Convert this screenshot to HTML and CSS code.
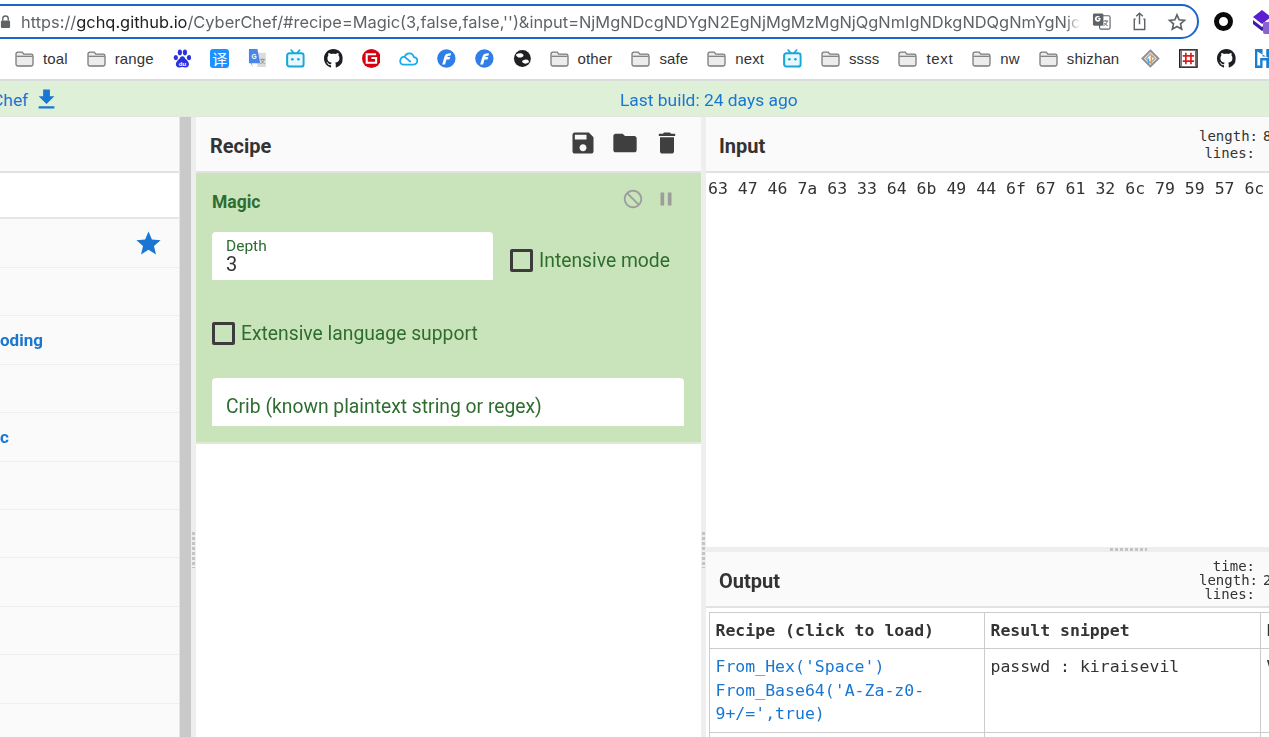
FILE: index.html
```html
<!DOCTYPE html>
<html lang="en">
<head>
<meta charset="utf-8">
<title>CyberChef</title>
<link rel="stylesheet" href="styles.css">
</head>
<body>
<svg class="defs" aria-hidden="true">
  <symbol id="folder" viewBox="0 0 19 16"><path d="M1 3.200C1 2 1.700 1.200 2.800 1.200h4.400l1.600 1.900h7.400c1.200 0 1.800.7 1.800 1.800v8.300c0 1.100-.7 1.800-1.800 1.800H2.800C1.700 15 1 14.300 1 13.200z" fill="#ececec" stroke="#7a7a7a" stroke-width="1.300"/><path d="M1.500 5.300h16" stroke="#7a7a7a" stroke-width="1.200"/></symbol>
  <symbol id="github" viewBox="0 0 16 16"><path fill="#1b1f23" d="M8 0C3.58 0 0 3.58 0 8c0 3.54 2.29 6.53 5.47 7.59.4.07.55-.17.55-.38 0-.19-.01-.82-.01-1.49-2.01.37-2.53-.49-2.69-.94-.09-.23-.48-.94-.82-1.13-.28-.15-.68-.52-.01-.53.63-.01 1.08.58 1.23.82.72 1.21 1.87.87 2.33.66.07-.52.28-.87.51-1.07-1.78-.2-3.64-.89-3.64-3.95 0-.87.31-1.59.82-2.15-.08-.2-.36-1.02.08-2.12 0 0 .67-.21 2.2.82.64-.18 1.32-.27 2-.27.68 0 1.36.09 2 .27 1.53-1.04 2.2-.82 2.2-.82.44 1.1.16 1.92.08 2.12.51.56.82 1.27.82 2.15 0 3.07-1.87 3.75-3.65 3.95.29.25.54.73.54 1.48 0 1.07-.01 1.93-.01 2.2 0 .21.15.46.55.38A8.013 8.013 0 0016 8c0-4.42-3.58-8-8-8z"/></symbol>
  <symbol id="bili" viewBox="0 0 20 20"><path d="M5.500 1l2.500 3M14.500 1L12 4" stroke="#18a8d8" stroke-width="1.800" stroke-linecap="round"/><rect x="1.200" y="4.500" width="17.600" height="14" rx="2.500" fill="#e8f7fc" stroke="#18a8d8" stroke-width="2.200"/><circle cx="6.800" cy="10.800" r="1.400" fill="#18a8d8"/><circle cx="13.200" cy="10.800" r="1.400" fill="#18a8d8"/></symbol>
  <symbol id="flogo" viewBox="0 0 20 20"><circle cx="10" cy="10" r="9.800" fill="#2f7ee8"/><path d="M5.500 16.500L8 8c.7-2.600 2.300-3.700 7-3.700l-.8 2.800c-2.600 0-3 .3-3.300 1.300h3.200l-.8 2.700h-3.200l-1.500 5.400z" fill="#fff"/></symbol>
</svg>

<header class="chrome">
  <div class="urlrow">
    <div class="omnibox">
      <svg class="lock" viewBox="0 0 12 14"><path d="M3 6V4a3 3 0 016 0v2" fill="none" stroke="#5f6368" stroke-width="1.500"/><rect x="1" y="6" width="10" height="8" rx="1.300" fill="#5f6368"/></svg>
      <div class="url"><span class="muted">https://</span>gchq.github.io<span class="muted">/CyberChef/#recipe=Magic(3,false,false,'')&amp;input=NjMgNDcgNDYgN2EgNjMgMzMgNjQgNmIgNDkgNDQgNmYgNjcgNjEgMzIgNmMgNzk</span></div>
      <svg class="omni-icon tr" viewBox="0 0 20 20"><rect x="8" y="4" width="11" height="14" rx="1.500" fill="#fff" stroke="#5f6368" stroke-width="1.200"/><rect x="1" y="1.500" width="11" height="13" rx="1.500" fill="#5f6368"/><path d="M9 6.200H6.500v1.400h1.300c-.3 1-1.900 1.300-2.600.4-.7-.9 0-2.500 1.300-2.500.5 0 .9.200 1.100.4l1-.9C7.400 4.300 6.700 4.100 6 4.100 4.200 4.100 3 5.500 3 7.200c0 1.800 1.400 3.100 3.100 3.100 2 0 3.100-1.600 2.900-4.100z" fill="#fff"/><path d="M12 9.500h5M14.500 8.500v1M16 9.500c-.5 2.500-2 4-4 5M13 11.500c.8 1.300 2 2.300 3.500 3" stroke="#5f6368" fill="none"/></svg>
      <svg class="omni-icon sh" viewBox="0 0 20 20"><path d="M6 7.500H4.500v11h11v-11H14M10 13V1.500M6.500 4.500L10 1.200l3.500 3.300" fill="none" stroke="#5f6368" stroke-width="1.500"/></svg>
      <svg class="omni-icon st" viewBox="0 0 24 24"><path d="M12 3.500l2.600 5.900 6.400.6-4.800 4.300 1.400 6.300L12 17.300l-5.600 3.300 1.400-6.300L3 10l6.400-.6z" fill="none" stroke="#5f6368" stroke-width="2"/></svg>
    </div>
    <div class="ext-ring"></div>
    <svg class="ext-purple" viewBox="0 0 20 24"><path d="M9 0l9 7-9 7-9-7z" fill="#5a1fd1"/><path d="M0 10l9 7 9-7v4l-9 7-9-7z" fill="#3d1aa8"/><rect x="10" y="12" width="12" height="12" rx="2" fill="#8a63d2"/></svg>
  </div>
  <nav class="bookmarks">
    <a class="bm"><svg class="fold"><use href="#folder"/></svg>toal</a>
    <a class="bm"><svg class="fold"><use href="#folder"/></svg>range</a>
    <svg class="ico" viewBox="0 0 20 20"><g fill="#2932e1"><ellipse cx="3" cy="9" rx="2.300" ry="2.800"/><ellipse cx="7.300" cy="3.500" rx="2.200" ry="3"/><ellipse cx="12.700" cy="3.500" rx="2.200" ry="3"/><ellipse cx="17" cy="9" rx="2.300" ry="2.800"/><path d="M10 7.500c-2 0-2.500 2-4 3.500C4.500 12.500 3 14 3 16.200c0 2.300 1.800 3.500 3.800 3.300 1-.1 2.200-.4 3.200-.4s2.200.3 3.200.4c2 .2 3.800-1 3.800-3.300 0-2.200-1.500-3.700-3-5.200C12.500 9.500 12 7.500 10 7.500z"/></g><text x="10" y="17.500" class="du">du</text></svg>
    <span class="ico yi">译</span>
    <svg class="ico" viewBox="0 0 20 20"><path d="M8 4h11v15H10z" fill="#dcdcdc"/><path d="M1 0h9l3 15H4l1 4-2-4H1z" fill="#4a86e8"/><text x="6.500" y="10.500" class="gt">G</text><text x="12.500" y="15" class="gt2">文</text></svg>
    <svg class="ico"><use href="#bili"/></svg>
    <svg class="ico"><use href="#github"/></svg>
    <svg class="ico" viewBox="0 0 20 20"><circle cx="10" cy="10" r="10" fill="#d7000f"/><path d="M15 5.500H5v9h10V9.500H10" fill="none" stroke="#fff" stroke-width="2.200"/></svg>
    <svg class="ico" viewBox="0 0 20 20"><path d="M4.500 16.500h10.500c5.500 0 6-7.500.8-8C14.500 3.500 8 3 6 8 .5 8-.5 16.500 4.500 16.500zM6 8.200l6.500 5.500" fill="none" stroke="#12b0f0" stroke-width="1.900"/></svg>
    <svg class="ico"><use href="#flogo"/></svg>
    <svg class="ico"><use href="#flogo"/></svg>
    <svg class="ico" viewBox="0 0 20 20"><circle cx="10" cy="10" r="9" fill="#202124"/><path d="M3 6c3-2 6-2 8 0 1 2-2 3-4 3S4 8 3 6zM17 14c-3 2-5 2-7 0-1-2 2-3 4-3s3 1 3 3z" fill="#fff"/></svg>
    <a class="bm bm-other"><svg class="fold"><use href="#folder"/></svg>other</a>
    <a class="bm"><svg class="fold"><use href="#folder"/></svg>safe</a>
    <a class="bm"><svg class="fold"><use href="#folder"/></svg>next</a>
    <svg class="ico"><use href="#bili"/></svg>
    <a class="bm"><svg class="fold"><use href="#folder"/></svg>ssss</a>
    <a class="bm bm-wide"><svg class="fold"><use href="#folder"/></svg>text</a>
    <a class="bm"><svg class="fold"><use href="#folder"/></svg>nw</a>
    <a class="bm"><svg class="fold"><use href="#folder"/></svg>shizhan</a>
    <svg class="ico after-last" viewBox="0 0 20 20"><path d="M10 1.500l8.500 8.500-8.500 8.500L1.500 10z" fill="#e4e4e4" stroke="#8f8f8f" stroke-width="2"/><path d="M10 5.500l4.500 4.500-4.500 4.500L5.500 10z" fill="#fff" stroke="#a8a8a8" stroke-width="1.500"/><path d="M10.500 8h3M11 8v7.500" stroke="#e8963a" stroke-width="1.600"/><path d="M8 10v6" stroke="#5aa0d8" stroke-width="1.500"/></svg>
    <svg class="ico" viewBox="0 0 20 20"><rect x=".800" y=".800" width="18.400" height="18.400" fill="#fff" stroke="#222" stroke-width="1.600"/><path d="M7.300 4v12M12.700 4v12M4 7.300h12M4 12.700h12" stroke="#d81e1e" stroke-width="1.800"/><path d="M2.500 2v16M17.500 2v16" stroke="#555"/></svg>
    <svg class="ico"><use href="#github"/></svg>
    <svg class="ico" viewBox="0 0 20 20"><path d="M0 0h8v8h4V0h8v20h-8v-8H8v8H0zM2.500 2.500v15h3v-8h9" fill="#1a7ed0" fill-rule="evenodd"/></svg>
  </nav>
</header>

<div class="banner">
  <div class="dl">
    <a class="dl-link">Chef</a>
    <svg class="dl-icon" viewBox="0 0 24 24"><path d="M19 9h-4V3H9v6H5l7 7 7-7zM5 18v2h14v-2H5z"/></svg>
  </div>
  <a class="build">Last build: 24 days ago</a>
</div>

<main class="app">
  <aside class="ops">
    <div class="pane-head"></div>
    <div class="search"></div>
    <ul class="cats">
      <li class="cat first"><svg class="star" viewBox="0 0 24 24"><path d="M12 17.270L18.180 21l-1.640-7.030L22 9.240l-7.190-.61L12 2 9.190 8.630 2 9.240l5.460 4.730L5.820 21z"/></svg></li>
      <li class="cat"></li>
      <li class="cat">oding</li>
      <li class="cat"></li>
      <li class="cat">c</li>
      <li class="cat"></li>
      <li class="cat"></li>
      <li class="cat"></li>
      <li class="cat"></li>
      <li class="cat"></li>
      <li class="cat"></li>
    </ul>
  </aside>
  <div class="scrollbar"></div>
  <div class="gutter-v"><span class="grip"></span></div>

  <section class="recipe">
    <div class="pane-head recipe-head">
      <h2 class="title">Recipe</h2>
      <div class="tools">
        <svg class="tool" viewBox="0 0 24 24"><path d="M17 3H5c-1.110 0-2 .9-2 2v14c0 1.100.89 2 2 2h14c1.100 0 2-.9 2-2V7l-4-4zm-5 16c-1.660 0-3-1.340-3-3s1.340-3 3-3 3 1.340 3 3-1.340 3-3 3zm3-10H5V5h10v4z"/></svg>
        <svg class="tool" viewBox="0 0 24 24"><path d="M10 4H4c-1.100 0-1.990.9-1.990 2L2 18c0 1.100.9 2 2 2h16c1.100 0 2-.9 2-2V8c0-1.100-.9-2-2-2h-8l-2-2z"/></svg>
        <svg class="tool" viewBox="0 0 24 24"><path d="M6 19c0 1.100.9 2 2 2h8c1.100 0 2-.9 2-2V7H6v12zM19 4h-3.500l-1-1h-5l-1 1H5v2h14V4z"/></svg>
      </div>
    </div>
    <div class="op">
      <div class="op-head">
        <span class="op-name">Magic</span>
        <span class="op-ctl">
          <svg class="ctl" viewBox="0 0 24 24"><path d="M12 2C6.480 2 2 6.480 2 12s4.480 10 10 10 10-4.480 10-10S17.520 2 12 2zm0 18c-4.420 0-8-3.580-8-8 0-1.850.63-3.550 1.690-4.900L16.900 18.310C15.550 19.370 13.850 20 12 20zm6.310-3.100L7.100 5.690C8.450 4.630 10.150 4 12 4c4.420 0 8 3.580 8 8 0 1.850-.63 3.550-1.690 4.900z"/></svg>
          <svg class="ctl" viewBox="0 0 24 24"><path d="M6 19h4V5H6v14zm8-14v14h4V5h-4z"/></svg>
        </span>
      </div>
      <div class="op-row">
        <div class="field depth">
          <span class="field-label">Depth</span>
          <span class="field-value">3</span>
        </div>
        <label class="check intensive"><span class="box"></span>Intensive mode</label>
      </div>
      <label class="check ext"><span class="box"></span>Extensive language support</label>
      <div class="field crib">Crib (known plaintext string or regex)</div>
    </div>
  </section>

  <div class="gutter-v"><span class="grip"></span></div>

  <section class="io">
    <div class="input">
      <div class="pane-head io-head">
        <h2 class="title">Input</h2>
        <dl class="stats">
          <dt>length:</dt><dd>8</dd>
          <dt>lines:</dt><dd></dd>
        </dl>
      </div>
      <div class="input-text">63 47 46 7a 63 33 64 6b 49 44 6f 67 61 32 6c 79 59 57 6c 73</div>
    </div>
    <div class="gutter-h"><span class="grip-h"></span></div>
    <div class="output">
      <div class="pane-head io-head out-head">
        <h2 class="title">Output</h2>
        <dl class="stats out-stats">
          <dt>time:</dt><dd></dd>
          <dt>length:</dt><dd>2</dd>
          <dt>lines:</dt><dd></dd>
        </dl>
      </div>
      <table class="magic">
        <tr><th class="c1">Recipe (click to load)</th><th class="c2">Result snippet</th><th class="c3">P</th></tr>
        <tr class="res"><td class="c1"><a>From_Hex('Space')<br>From_Base64('A-Za-z0-<br>9+/=',true)</a></td><td class="c2">passwd : kiraisevil</td><td class="c3">V</td></tr>
        <tr><td class="c1">&nbsp;</td><td class="c2"></td><td class="c3"></td></tr>
      </table>
    </div>
  </section>
</main>
</body>
</html>
```
FILE: styles.css
```css
* { box-sizing: border-box; }
html, body { margin: 0; height: 100%; }
body { width: 1269px; height: 737px; overflow: hidden; background: #fff; font-family: Roboto, "Liberation Sans", sans-serif; color: #333; filter: blur(.35px); }
.defs { display: none; }

.chrome { height: 81px; background: #fff; border-bottom: 2px solid #dcdcdc; font-family: "Liberation Sans", Arial, sans-serif; }
.urlrow { height: 40px; display: flex; align-items: center; padding-top: 3px; }
.omnibox { flex: none; width: 1219px; height: 35px; margin-left: -20px; border: 2.500px solid #1a66cc; border-radius: 18px; display: flex; align-items: center; padding-left: 18px; }
.lock { flex: none; width: 11px; height: 13px; margin-right: 10px; }
.url { flex: none; width: 1060px; overflow: hidden; white-space: nowrap; font-family: Inter, "Liberation Sans", sans-serif; font-size: 16.400px; color: #202124; -webkit-mask-image: linear-gradient(90deg, #000 98.500%, transparent); mask-image: linear-gradient(90deg, #000 98.500%, transparent); }
.muted { color: #5f6368; }
.omni-icon { flex: none; width: 19px; height: 19px; }
.tr { margin-left: 11px; }
.sh { margin-left: 19px; }
.st { margin-left: 18px; width: 20px; height: 20px; }
.ext-ring { flex: none; width: 19px; height: 19px; margin-left: 15px; border: 5px solid #0b0b0b; border-radius: 50%; }
.ext-purple { flex: none; width: 20px; height: 24px; margin-left: 20px; }

.bookmarks { height: 39px; padding: 0 0 2px 15px; display: flex; align-items: center; gap: 19px; white-space: nowrap; }
.bm { display: flex; align-items: center; gap: 9px; font-size: 15px; letter-spacing: .12px; color: #333; }
.bm-other { margin-left: -1px; }
.bm-wide { letter-spacing: .7px; }
.fold { width: 19px; height: 16px; flex: none; }
.ico { flex: none; width: 18.800px; height: 19px; }
.after-last { margin-left: 3px; }
.yi { display: flex; align-items: center; justify-content: center; background: #1e90ff; color: #fff; border-radius: 3px; font: 15px "Noto Sans CJK SC", sans-serif; }
.du { fill: #fff; font: bold 6.500px "Liberation Sans", sans-serif; text-anchor: middle; }
.gt { fill: #fff; font: bold 7px "Liberation Sans", sans-serif; text-anchor: middle; }
.gt2 { fill: #777; font: 6px "Noto Sans CJK SC", sans-serif; }

.banner { height: 36px; padding-top: 2px; background: #dff0d8; border-bottom: 1px solid #e4e4e4; display: flex; align-items: center; color: #1976d2; font-size: 17.400px; }
.dl { display: flex; align-items: center; gap: 5px; width: 628px; margin-left: -8px; }
.dl-link { color: #1976d2; }
.dl-icon { width: 27px; height: 27px; fill: #1976d2; }
.build { color: #1976d2; }

.app { height: 620px; display: grid; grid-template-columns: 180px 11px 5px 505px 5px 563px; }
.pane-head { height: 56px; background: #fafafa; border-bottom: 2px solid #e2e2e2; }

.ops { background: #fafafa; border-right: 1px solid #e6e6e6; overflow: hidden; }
.search { height: 46px; background: #fff; border-bottom: 2px solid #e6e6e6; }
.cats { list-style: none; margin: 0; padding: 0; }
.cat { height: 48.400px; border-bottom: 1.500px solid #efefef; display: flex; align-items: center; justify-content: space-between; font-size: 17px; font-weight: 700; color: #1976d2; }
.cat.first { height: 49px; justify-content: flex-end; padding-right: 16px; }
.star { width: 29px; height: 29px; fill: #1976d2; }

.scrollbar { background: #c9c9c9; }
.gutter-v { background: #eee; display: flex; align-items: flex-start; justify-content: center; padding-top: 415px; }
.grip { width: 3px; height: 36px; background: repeating-linear-gradient(#c4c4c4 0 3px, transparent 3px 5px); }

.recipe { background: #fff; min-width: 0; }
.recipe-head { display: flex; align-items: center; justify-content: space-between; padding: 3px 20px 0 14px; }
.title { margin: 0; font-size: 20px; font-weight: 700; color: #333; }
.tools { display: flex; gap: 14px; margin-top: -6px; }
.tool { width: 28px; height: 28px; fill: #3f3f3f; }

.op { height: 271px; background: #c9e4ba; border-bottom: 2px solid #dcebd4; padding: 0 16px; color: #2f6c30; font-size: 19.300px; }
.op-head { height: 59px; padding-bottom: 2px; display: flex; align-items: center; justify-content: space-between; }
.op-name { font-size: 17.500px; font-weight: 700; }
.op-ctl { display: flex; gap: 11px; margin-top: -5px; margin-right: 8px; }
.ctl { width: 22px; height: 22px; fill: #9d9d9d; }
.op-row { display: flex; align-items: center; gap: 17px; height: 48px; }
.field { background: #fff; border-radius: 4px 4px 0 0; padding: 0 14px; }
.depth { width: 281px; height: 48px; display: flex; flex-direction: column; padding-top: 7px; }
.field-label { font-size: 15.500px; line-height: 15px; }
.field-value { font-size: 20px; line-height: 20px; color: #333; }
.check { display: flex; align-items: center; gap: 6px; white-space: nowrap; }
.intensive { padding-top: 8px; }
.box { flex: none; width: 23px; height: 23px; border: 3px solid #3c3c3c; border-radius: 2px; }
.ext { margin-top: 29px; height: 48px; }
.crib { margin-top: 21px; width: 472px; height: 48px; display: flex; align-items: flex-end; padding-bottom: 8px; white-space: nowrap; }

.io { min-width: 0; overflow: hidden; display: flex; flex-direction: column; }
.input { height: 430px; }
.io-head { display: flex; align-items: center; justify-content: space-between; padding: 3px 0 0 13px; }
.stats { flex: none; width: 70px; margin: 0 0 2px; display: grid; grid-template-columns: 56px 14px; font: 14px/17px "DejaVu Sans Mono", monospace; color: #333; overflow: hidden; }
.stats dt { text-align: right; }
.stats dd { margin: 0; padding-left: 8px; }
.out-stats { line-height: 14px; font-size: 14px; }
.input-text { padding: 5px 0 0 2px; font: 16.500px/22px "DejaVu Sans Mono", monospace; color: #333; white-space: nowrap; }
.gutter-h { height: 5px; background: #eee; display: flex; justify-content: center; align-items: center; padding-left: 282px; }
.grip-h { width: 37px; height: 3px; background: repeating-linear-gradient(90deg, #c4c4c4 0 3px, transparent 3px 5px); }
.output { flex: 1; min-height: 0; }
.out-head { height: 56px; }

.magic { border-collapse: collapse; margin: 4px 0 0 3px; table-layout: fixed; width: 700px; font: 16.500px/23.600px "DejaVu Sans Mono", monospace; color: #333; }
.magic th, .magic td { border: 1px solid #ccc; padding: 6px 5.500px; text-align: left; vertical-align: top; }
.magic th { height: 36px; padding: 6px 5.500px 5px; font-weight: 700; }
.c1 { width: 275px; }
.c2 { width: 276px; }
.magic a { color: #1976d2; }
```
